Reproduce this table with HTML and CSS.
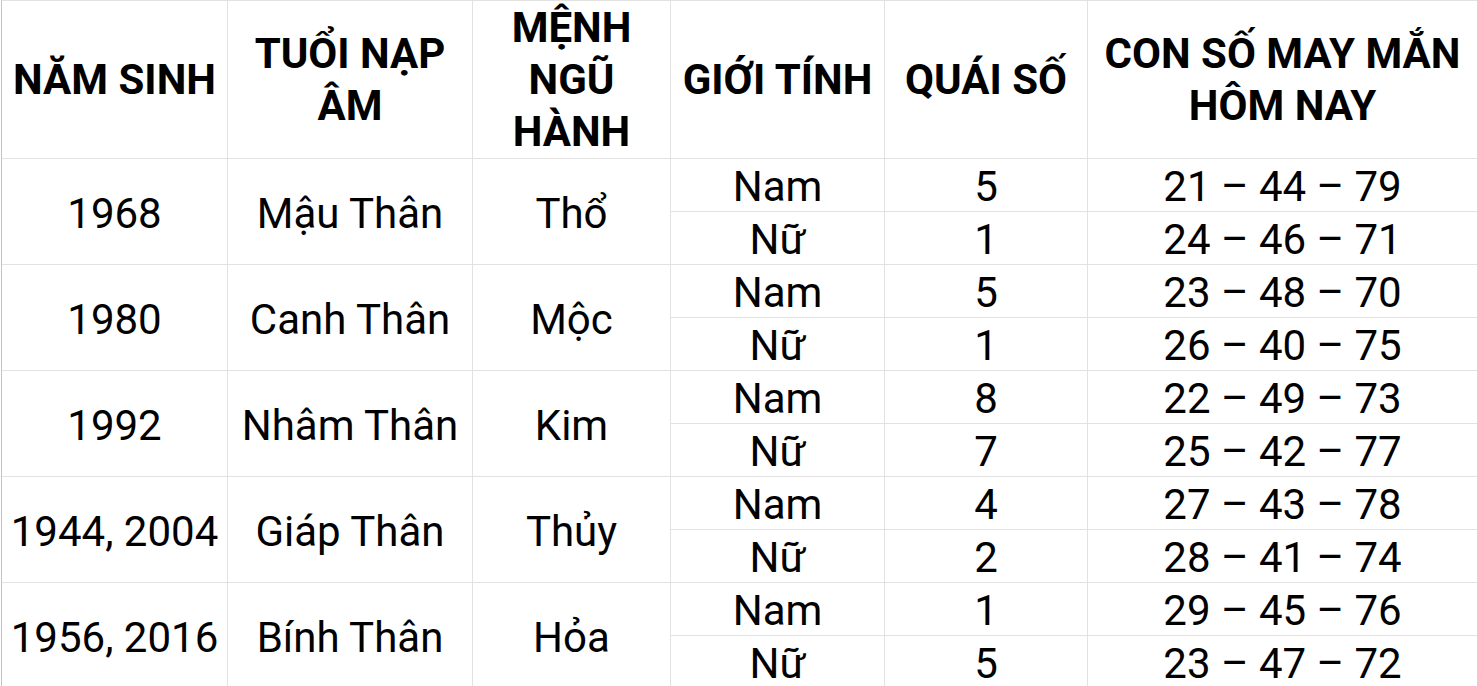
FILE: index.html
```html
<!DOCTYPE html>
<html lang="vi">
<head>
<meta charset="utf-8">
<title>Con số may mắn</title>
<link rel="stylesheet" href="styles.css">
</head>
<body>
<div class="wrap">
<table class="lucky">
<colgroup>
<col class="c1"><col class="c2"><col class="c3"><col class="c4"><col class="c5"><col class="c6">
</colgroup>
<thead>
<tr>
<th>NĂM SINH</th>
<th>TUỔI NẠP<br>ÂM</th>
<th>MỆNH<br>NGŨ<br>HÀNH</th>
<th>GIỚI TÍNH</th>
<th>QUÁI SỐ</th>
<th>CON SỐ MAY MẮN<br>HÔM NAY</th>
</tr>
</thead>
<tbody>
<tr><td rowspan="2">1968</td><td rowspan="2">Mậu Thân</td><td rowspan="2">Thổ</td><td>Nam</td><td>5</td><td>21 – 44 – 79</td></tr>
<tr><td>Nữ</td><td>1</td><td>24 – 46 – 71</td></tr>
<tr><td rowspan="2">1980</td><td rowspan="2">Canh Thân</td><td rowspan="2">Mộc</td><td>Nam</td><td>5</td><td>23 – 48 – 70</td></tr>
<tr><td>Nữ</td><td>1</td><td>26 – 40 – 75</td></tr>
<tr><td rowspan="2">1992</td><td rowspan="2">Nhâm Thân</td><td rowspan="2">Kim</td><td>Nam</td><td>8</td><td>22 – 49 – 73</td></tr>
<tr><td>Nữ</td><td>7</td><td>25 – 42 – 77</td></tr>
<tr><td rowspan="2">1944, 2004</td><td rowspan="2">Giáp Thân</td><td rowspan="2">Thủy</td><td>Nam</td><td>4</td><td>27 – 43 – 78</td></tr>
<tr><td>Nữ</td><td>2</td><td>28 – 41 – 74</td></tr>
<tr><td rowspan="2">1956, 2016</td><td rowspan="2">Bính Thân</td><td rowspan="2">Hỏa</td><td>Nam</td><td>1</td><td>29 – 45 – 76</td></tr>
<tr><td>Nữ</td><td>5</td><td>23 – 47 – 72</td></tr>
</tbody>
</table>
</div>
</body>
</html>
```
FILE: styles.css
```css
html, body {
  margin: 0;
  padding: 0;
  background: #ffffff;
  overflow: hidden;
}
.wrap {
  padding-left: 1px;
  width: 1476px;
  height: 686px;
  overflow: hidden;
}
.lucky {
  border-collapse: separate;
  border-spacing: 0;
  table-layout: fixed;
  width: 1476px;
  border-top: 1px solid #e2e2e2;
  border-left: 1px solid #c3c3c3;
  font-family: Roboto, "Noto Sans", sans-serif;
  font-size: 42px;
  color: #000000;
}
.c1 { width: 226px; }
.c2 { width: 245px; }
.c3 { width: 198px; }
.c4 { width: 214px; }
.c5 { width: 203px; }
.c6 { width: 389px; }
.lucky th,
.lucky td {
  box-sizing: border-box;
  padding: 0;
  border-right: 1px solid #e2e2e2;
  border-bottom: 1px solid #e2e2e2;
  text-align: center;
  vertical-align: middle;
  white-space: nowrap;
}
.lucky th:last-child,
.lucky tr > td:last-child {
  border-right: 0;
}
.lucky th {
  font-weight: 700;
  line-height: 52px;
  height: 158px;
}
.lucky td {
  font-weight: 400;
  line-height: 48px;
  padding-top: 4px;
  height: 53px;
}
```
